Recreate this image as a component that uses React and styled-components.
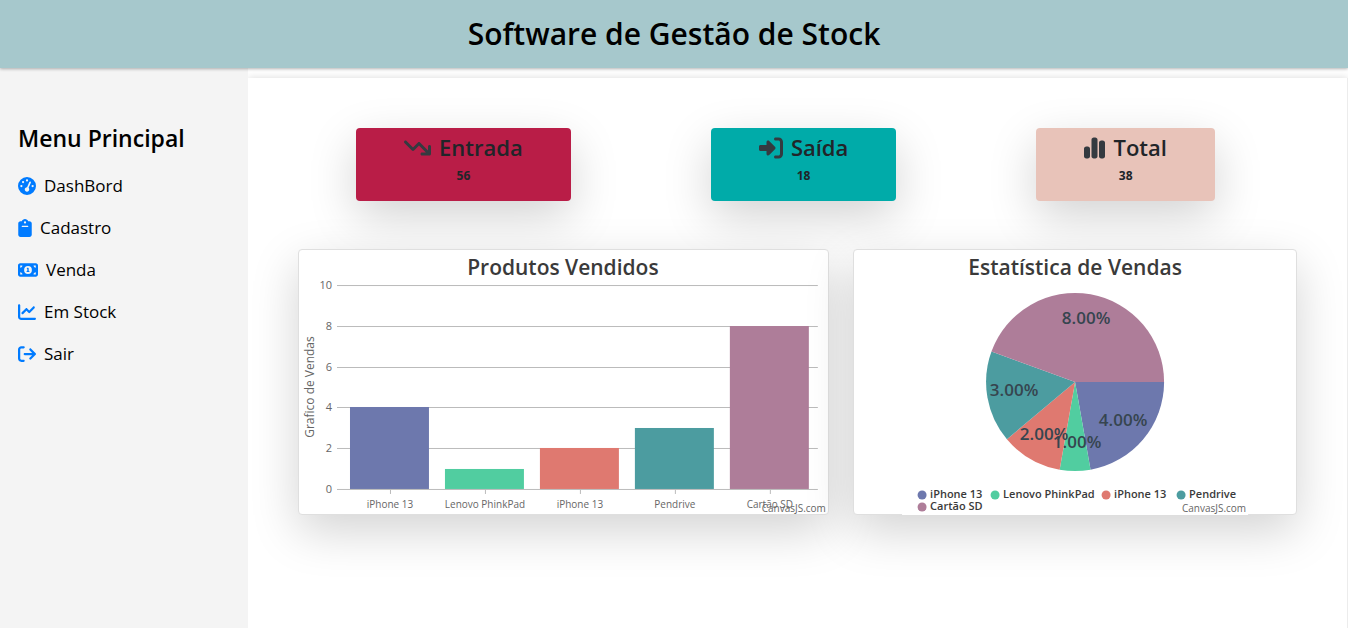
import React from "react";
import styled, { createGlobalStyle } from "styled-components";
import {
  FaGaugeHigh,
  FaClipboard,
  FaMoneyBill1,
  FaChartLine,
  FaArrowRightFromBracket,
  FaArrowTrendDown,
  FaRightToBracket,
  FaChartSimple,
} from "react-icons/fa6";

const GlobalStyle = createGlobalStyle`
  * { box-sizing: border-box; }
  body {
    margin: 0;
    background: #fff;
    color: #212529;
    font-family: "Segoe UI", "Open Sans", "Noto Sans", sans-serif;
  }
`;

const Page = styled.div`
  display: flex;
  flex-direction: column;
  min-height: 100vh;
`;

const Header = styled.header`
  position: relative;
  display: flex;
  align-items: center;
  justify-content: center;
  height: 68px;
  background: #a6c8cc;
  box-shadow: 0 1px 3px rgba(0, 0, 0, 0.3);
`;

const Title = styled.h1`
  margin: 0;
  font-size: 30px;
  line-height: 40px;
  font-weight: 600;
  color: #000;
`;

const Body = styled.div`
  flex: 1;
  display: flex;
`;

const Sidebar = styled.nav`
  flex: 0 0 248px;
  padding: 55px 18px 0;
  background: #f4f4f4;
`;

const MenuTitle = styled.h2`
  margin: 0 0 18px;
  font-size: 23px;
  line-height: 30px;
  font-weight: 600;
  color: #000;
`;

const MenuList = styled.ul`
  display: flex;
  flex-direction: column;
  gap: 12px;
  margin: 0;
  padding: 0;
  list-style: none;
`;

const MenuLink = styled.a`
  display: flex;
  align-items: center;
  gap: 8px;
  font-size: 17px;
  line-height: 30px;
  color: #000;
  text-decoration: none;

  svg {
    width: ${(p) => p.$iconWidth}px;
    height: 18px;
    color: #007bff;
  }
`;

const Main = styled.main`
  flex: 1;
  min-width: 0;
  margin-top: 10px;
  padding: 50px 50px 40px;
  border-right: 1px solid #ececec;
  box-shadow: 0 0 8px rgba(0, 0, 0, 0.15);
  clip-path: inset(-10px 0 0 0);
`;

const Stats = styled.section`
  display: flex;
  justify-content: space-around;
  margin: 0 12px 48px -12px;
`;

const Stat = styled.article`
  display: flex;
  flex-direction: column;
  align-items: center;
  height: 73px;
  padding: 5px 48px 0;
  border-radius: 4px;
  background: ${(p) => p.$color};
  box-shadow: 0 16px 48px rgba(0, 0, 0, 0.175);
`;

const StatTitle = styled.h2`
  display: flex;
  align-items: center;
  gap: 8px;
  margin: 0 0 8px;
  font-size: 22px;
  line-height: 29px;
  font-weight: 600;

  svg {
    width: ${(p) => p.$iconWidth}px;
    height: 24px;
    color: #343a40;
  }
`;

const StatValue = styled.strong`
  font-size: 12px;
  line-height: 12px;
  font-weight: 700;
`;

const Charts = styled.section`
  display: flex;
  gap: 24px;
`;

const ChartCard = styled.figure`
  flex: ${(p) => p.$share} 1 0;
  min-width: 0;
  height: 266px;
  margin: 0;
  border: 1px solid #dfdfdf;
  border-radius: 4px;
  background: #fff;
  box-shadow: 0 16px 48px rgba(0, 0, 0, 0.175);
`;

const Plot = styled.svg`
  display: block;
  width: 100%;
  height: 265px;
  font-family: "Trebuchet MS", "Open Sans", sans-serif;
`;

const PlotTitle = styled.text`
  font-size: 21px;
  font-weight: 600;
  fill: #3a3a3a;
  text-anchor: middle;
`;

const AxisText = styled.text`
  font-size: ${(p) => p.$size || 11}px;
  fill: #666;
  text-anchor: ${(p) => p.$anchor || "middle"};
`;

const SliceText = styled.text`
  font-size: 17px;
  font-weight: 600;
  fill: #36454f;
  text-anchor: middle;
`;

const LegendText = styled.text`
  font-size: 11px;
  font-weight: 600;
  fill: #3a3a3a;
`;

const menu = [
  { label: "DashBord", Icon: FaGaugeHigh, iconWidth: 18 },
  { label: "Cadastro", Icon: FaClipboard, iconWidth: 14 },
  { label: "Venda", Icon: FaMoneyBill1, iconWidth: 20 },
  { label: "Em Stock", Icon: FaChartLine, iconWidth: 18 },
  { label: "Sair", Icon: FaArrowRightFromBracket, iconWidth: 18 },
];

const stats = [
  { label: "Entrada", value: 56, color: "#b91d47", Icon: FaArrowTrendDown, iconWidth: 27 },
  { label: "Saída", value: 18, color: "#00aba9", Icon: FaRightToBracket, iconWidth: 24 },
  { label: "Total", value: 38, color: "#e8c3b9", Icon: FaChartSimple, iconWidth: 21 },
];

const products = [
  { name: "iPhone 13", value: 4, color: "#6d78ad", label: [137, 170], legend: [20, 244] },
  { name: "Lenovo PhinkPad", value: 1, color: "#51cda0", label: [91, 192], legend: [93, 244] },
  { name: "iPhone 13", value: 2, color: "#df7970", label: [58, 184], legend: [204, 244] },
  { name: "Pendrive", value: 3, color: "#4c9ca0", label: [28, 140], legend: [279, 244] },
  { name: "Cartão SD", value: 8, color: "#ae7d99", label: [100, 68], legend: [20, 256] },
];

const BASE = 239;
const yFor = (v) => Math.round(BASE - v * 20.4);

function BarChart() {
  return (
    <Plot viewBox="0 0 529 265" role="img" aria-label="Produtos Vendidos">
      <PlotTitle x="264" y="25">Produtos Vendidos</PlotTitle>
      {[0, 2, 4, 6, 8, 10].map((v) => (
        <g key={v}>
          <rect x="38" y={yFor(v)} width="481" height="1" fill="#bbb" />
          <AxisText $anchor="end" x="33" y={yFor(v) + 4}>{v}</AxisText>
        </g>
      ))}
      {products.map((p, i) => (
        <g key={i}>
          <rect x={51 + i * 95} y={yFor(p.value)} width="79" height={BASE - yFor(p.value)} fill={p.color} />
          <rect x={91 + i * 95} y={BASE} width="1" height="5" fill="#bbb" />
          <AxisText $size={10} x={91 + i * 95} y="258">{p.name}</AxisText>
        </g>
      ))}
      <AxisText $size={12} transform="translate(15 137) rotate(-90)">Grafico de Vendas</AxisText>
      <AxisText $size={10} $anchor="end" x="527" y="262">CanvasJS.com</AxisText>
    </Plot>
  );
}

const CX = 173;
const CY = 132;
const R = 89;
const total = products.reduce((sum, p) => sum + p.value, 0);

function slicePath(start, end) {
  const point = (share) => {
    const a = (share / total) * 2 * Math.PI;
    return `${(CX + R * Math.cos(a)).toFixed(2)} ${(CY + R * Math.sin(a)).toFixed(2)}`;
  };
  return `M${CX} ${CY}L${point(start)}A${R} ${R} 0 0 1 ${point(end)}Z`;
}

function PieChart() {
  let acc = 0;
  return (
    <Plot viewBox="0 0 346 265" role="img" aria-label="Estatística de Vendas">
      <rect width="346" height="265" fill="#fff" />
      <PlotTitle x="173" y="25">Estatística de Vendas</PlotTitle>
      {products.map((p, i) => {
        const start = acc;
        acc += p.value;
        return <path key={i} d={slicePath(start, acc)} fill={p.color} />;
      })}
      {products.map((p, i) => (
        <SliceText key={i} x={p.label[0] + 84} y={p.label[1] + 6}>{p.value.toFixed(2)}%</SliceText>
      ))}
      {products.map((p, i) => (
        <g key={i}>
          <circle cx={p.legend[0]} cy={p.legend[1] + 1} r="4.5" fill={p.color} />
          <LegendText x={p.legend[0] + 8} y={p.legend[1] + 4}>{p.name}</LegendText>
        </g>
      ))}
      <AxisText $size={10} $anchor="end" x="344" y="262">CanvasJS.com</AxisText>
    </Plot>
  );
}

export default function App() {
  return (
    <Page>
      <GlobalStyle />
      <Header>
        <Title>Software de Gestão de Stock</Title>
      </Header>
      <Body>
        <Sidebar>
          <MenuTitle>Menu Principal</MenuTitle>
          <MenuList>
            {menu.map(({ label, Icon, iconWidth }) => (
              <li key={label}>
                <MenuLink href="#" $iconWidth={iconWidth}>
                  <Icon />
                  {label}
                </MenuLink>
              </li>
            ))}
          </MenuList>
        </Sidebar>
        <Main>
          <Stats>
            {stats.map(({ label, value, color, Icon, iconWidth }) => (
              <Stat key={label} $color={color}>
                <StatTitle $iconWidth={iconWidth}>
                  <Icon />
                  {label}
                </StatTitle>
                <StatValue>{value}</StatValue>
              </Stat>
            ))}
          </Stats>
          <Charts>
            <ChartCard $share={531}>
              <BarChart />
            </ChartCard>
            <ChartCard $share={444}>
              <PieChart />
            </ChartCard>
          </Charts>
        </Main>
      </Body>
    </Page>
  );
}
